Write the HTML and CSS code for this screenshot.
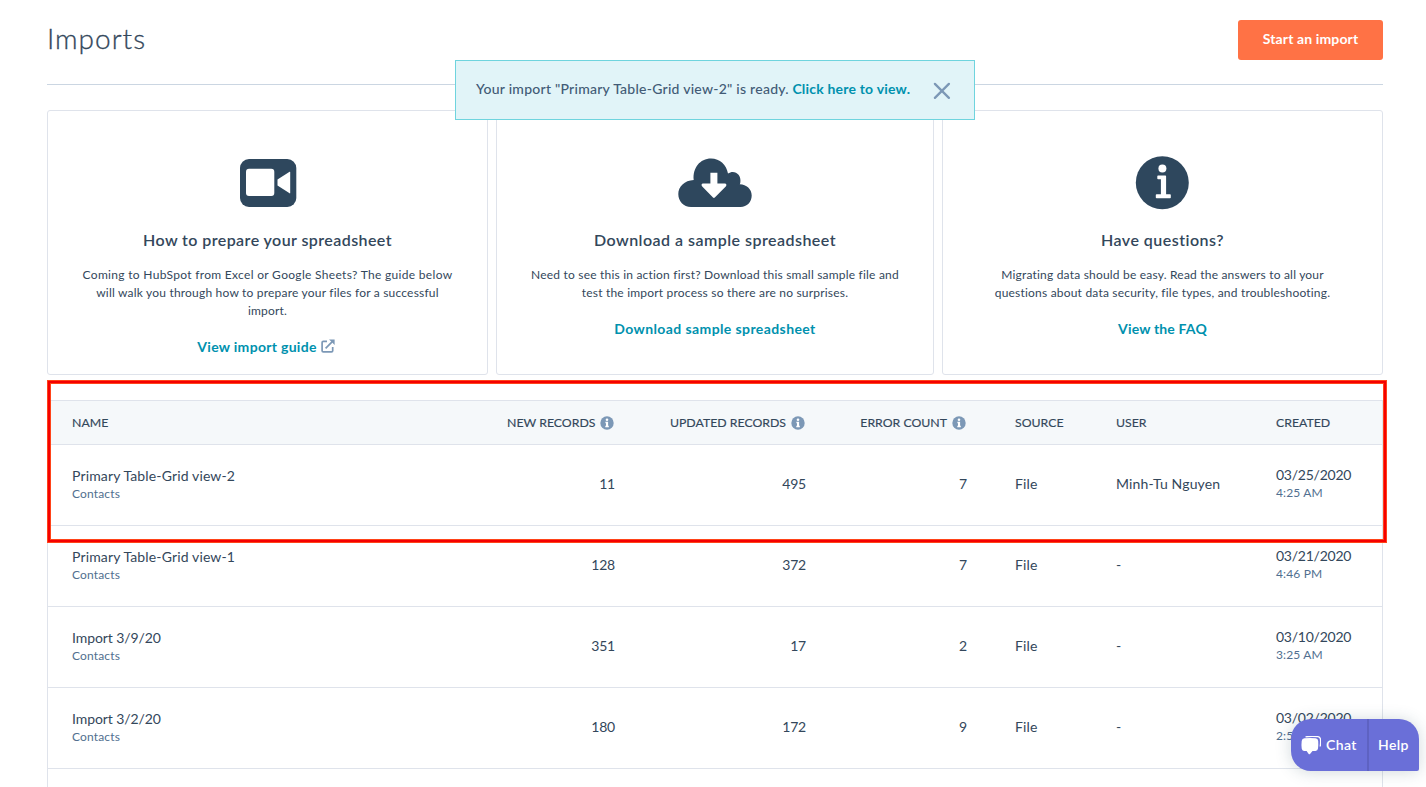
FILE: index.html
```
<!DOCTYPE html>
<html lang="en">
<head>
<meta charset="utf-8">
<title>Imports</title>
<link rel="stylesheet" href="styles.css">
</head>
<body>
<svg class="sprite" aria-hidden="true">
  <symbol id="info" viewBox="0 0 14 14">
    <circle cx="7" cy="7" r="6.7" fill="#7c98b6"/>
    <circle cx="7" cy="3.7" r="1.3" fill="#fff"/>
    <path d="M5.400 5.800h2.700v3.900h.700v1.500H5.300V9.700h.700V7.200h-.600z" fill="#fff"/>
  </symbol>
</svg>
<div class="page">
  <header class="header">
    <h1 class="title">Imports</h1>
    <button class="start"><span>Start an import</span></button>
  </header>

  <section class="cards">
    <article class="card">
      <svg class="card-icon" width="76" height="60" viewBox="0 0 76 60">
        <rect x="10" y="7" width="56.300" height="48" rx="9" fill="#2e475d"/>
        <rect x="16" y="16.800" width="28.300" height="27.200" rx="3" fill="#fff"/>
        <path d="M60.200 20v21q0 .6-.6.300L47.500 33.500V27.500L59.600 19.800q.6-.3.600.2z" fill="#fff"/>
      </svg>
      <h2 class="card-title t1">How to prepare your spreadsheet</h2>
      <p class="card-text"><span class="p1">Coming to HubSpot from Excel or Google Sheets? The guide below</span><br><span class="p2">will walk you through how to prepare your files for a successful</span><br><span class="p3">import.</span></p>
      <a class="card-link guide"><span class="l1">View import guide</span>
        <svg width="14" height="14" viewBox="0 0 14 14" fill="none" stroke="#7c98b6" stroke-width="1.700"><path d="M6 2.300H2.300Q1.100 2.300 1.100 3.500V11.700Q1.100 12.900 2.300 12.900H10.500Q11.700 12.900 11.700 11.700V8M4.600 9.400L11.300 2.700"/><path d="M8 .400H13.600V6L11.700 4.100 9.900 2.300z" fill="#7c98b6" stroke="none"/></svg>
      </a>
    </article>
    <article class="card">
      <svg class="card-icon" width="76" height="60" viewBox="0 0 76 60">
        <path d="M14 55C6.500 55 1.300 49.300 1.300 42S7.500 28.300 16.700 27.900C15.500 16 23 6.500 34 6.500c9 0 15.500 6.500 17 15 6-4.300 13.500.5 12.400 8.500-.1.900-.3 1.500-.6 2.200C69.500 32.600 74.700 37 74.700 43.500 74.700 50 70 55 63.500 55z" fill="#2e475d"/>
        <path transform="translate(1.100 0)" d="M32.300 20.700h7v10.800h7.500q2.300.5 1.100 2.800L36.700 45.600q-.9.700-1.800 0L23.900 34.300q-1.300-2.300 1-2.800h7.400z" fill="#fff"/>
      </svg>
      <h2 class="card-title t2">Download a sample spreadsheet</h2>
      <p class="card-text"><span class="p4">Need to see this in action first? Download this small sample file and</span><br><span class="p5">test the import process so there are no surprises.</span></p>
      <a class="card-link"><span class="l2">Download sample spreadsheet</span></a>
    </article>
    <article class="card">
      <svg class="card-icon" width="76" height="60" viewBox="0 0 76 60">
        <g transform="translate(-.4 0)">
        <circle cx="37.700" cy="30.700" r="26.500" fill="#2e475d"/>
        <circle cx="37.800" cy="16.500" r="4" fill="#fff"/>
        <path d="M33.500 23.500h7.200q.8 0 .8.800v18h3.900q.8 0 .8.800v2.300q0 .8-.8.800H32q-.8 0-.8-.8v-2.300q0-.8.800-.8h4.300V27.300h-2.800q-.8 0-.8-.8v-2.200q0-.8.800-.8z" fill="#fff"/>
        </g>
      </svg>
      <h2 class="card-title t3">Have questions?</h2>
      <p class="card-text"><span class="p6">Migrating data should be easy. Read the answers to all your</span><br><span class="p7">questions about data security, file types, and troubleshooting.</span></p>
      <a class="card-link"><span class="l3">View the FAQ</span></a>
    </article>
  </section>

  <section class="table-wrap">
    <table class="table">
      <colgroup><col class="c-name"><col class="c-new"><col class="c-upd"><col class="c-err"><col class="c-src"><col class="c-user"><col class="c-date"></colgroup>
      <thead>
        <tr>
          <th>NAME</th>
          <th class="num"><span>NEW RECORDS</span><svg class="info"><use href="#info"/></svg></th>
          <th class="num"><span>UPDATED RECORDS</span><svg class="info"><use href="#info"/></svg></th>
          <th class="num"><span>ERROR COUNT</span><svg class="info"><use href="#info"/></svg></th>
          <th>SOURCE</th><th>USER</th><th>CREATED</th>
        </tr>
      </thead>
      <tbody>
        <tr><td class="name"><div>Primary Table-Grid view-2</div><small>Contacts</small></td><td class="num">11</td><td class="num">495</td><td class="num">7</td><td class="mid">File</td><td class="mid">Minh-Tu Nguyen</td><td class="date"><div>03/25/2020</div><small>4:25 AM</small></td></tr>
        <tr><td class="name"><div>Primary Table-Grid view-1</div><small>Contacts</small></td><td class="num">128</td><td class="num">372</td><td class="num">7</td><td class="mid">File</td><td class="mid">-</td><td class="date"><div>03/21/2020</div><small>4:46 PM</small></td></tr>
        <tr><td class="name short"><div>Import 3/9/20</div><small>Contacts</small></td><td class="num">351</td><td class="num">17</td><td class="num">2</td><td class="mid">File</td><td class="mid">-</td><td class="date"><div>03/10/2020</div><small>3:25 AM</small></td></tr>
        <tr><td class="name short"><div>Import 3/2/20</div><small>Contacts</small></td><td class="num">180</td><td class="num">172</td><td class="num">9</td><td class="mid">File</td><td class="mid">-</td><td class="date"><div>03/02/2020</div><small>2:5</small></td></tr>
        <tr class="rest"><td colspan="7"></td></tr>
      </tbody>
    </table>
    <div class="highlight"></div>
  </section>
</div>

<div class="alert">
  <p class="alert-text"><span class="a1">Your import "Primary Table-Grid view-2" is ready.</span> <a class="a2">Click here to view.</a></p>
  <svg class="close" width="18" height="18" viewBox="0 0 18 18" fill="none" stroke="#7c98b6" stroke-width="2.300" stroke-linecap="round"><path d="M1.900 1.900l14 14M15.900 1.900l-14 14"/></svg>
</div>

<div class="widget">
  <div class="chat">
    <svg width="20" height="19" viewBox="0 0 20 19">
      <path d="M4.500 .9Q10.500-.2 17 .7 19.300 1 19.500 3.500 19.800 7 19.200 10.500" fill="none" stroke="#fff" stroke-width="1.300"/>
      <path d="M3.500 2.300Q9 1.500 14.500 2.300 17 2.600 17.200 5 17.500 9 17 12.500 16.700 14.700 14.500 15H11.500L9 18Q8.300 18.700 7.700 18L5.600 15H3Q1 14.800.700 12.500.2 9 .7 5 1 2.600 3.500 2.300z" fill="#fff"/>
    </svg>
    <span>Chat</span>
  </div>
  <div class="help">Help</div>
</div>
</body>
</html>
```

FILE: styles.css
```
* { box-sizing: border-box; }
html, body { height: 100%; }
body {
  margin: 0;
  overflow: hidden;
  background: #fff;
  color: #33475b;
  font-family: Lato, "Open Sans", sans-serif;
  font-size: 14px;
}
.sprite { position: absolute; width: 0; height: 0; }
.page { height: 787px; padding: 0 43px 0 47px; overflow: hidden; }

.header {
  display: flex;
  justify-content: space-between;
  align-items: flex-start;
  height: 85px;
  padding-top: 20px;
  border-bottom: 1px solid #cbd6e2;
}
.title { margin: 0; font-size: 28px; line-height: 37px; font-weight: 300; letter-spacing: 1px; -webkit-text-stroke: .3px; }
.start {
  width: 145px;
  height: 40px;
  padding: 0 0 2px;
  border: 0;
  border-radius: 3px;
  background: #ff7245;
  color: #fff;
  font: 700 14px/38px Lato, sans-serif;
  letter-spacing: .13px;
}

.cards { display: grid; grid-template-columns: 441px 438px 441px; gap: 8px; margin-top: 25px; }
.card {
  display: flex;
  flex-direction: column;
  align-items: center;
  height: 265px;
  padding-top: 41px;
  border: 1px solid #dfe3eb;
  border-radius: 3px;
  text-align: center;
}
.card-icon { display: block; }
.card-title { margin: 16px 0 0; font-size: 16px; line-height: 24px; font-weight: 600; white-space: nowrap; }
.t1 { letter-spacing: .42px; }
.t2, .t3 { letter-spacing: .47px; }
.card-text { margin: 14px 0 0; font-size: 12px; line-height: 18px; letter-spacing: .2px; white-space: nowrap; }
.p1 { letter-spacing: .31px; }
.card-link {
  display: flex;
  align-items: center;
  gap: 4px;
  margin-top: 15px;
  height: 22px;
  color: #0091ae;
  font-size: 14px;
  font-weight: 700;
  white-space: nowrap;
}
.guide { margin-right: 3px; }
.l1 { letter-spacing: .3px; }
.l2 { letter-spacing: .4px; }
.l3 { letter-spacing: .17px; }

.table-wrap { position: relative; margin-top: 25px; }
.table {
  width: 1336px;
  table-layout: fixed;
  border-collapse: separate;
  border-spacing: 0;
  border: 1px solid #dfe3eb;
  border-bottom: 0;
}
.c-name { width: 435px; }
.c-new { width: 156px; }
.c-upd { width: 191px; }
.c-err { width: 161px; }
.c-src { width: 101px; }
.c-user { width: 160px; }
.c-date { width: 130px; }
th, td { padding: 0 24px; text-align: left; white-space: nowrap; border-bottom: 1px solid #dfe3eb; }
th { height: 44px; background: #f5f8fa; font-size: 12.3px; font-weight: 400; -webkit-text-stroke: .15px; }
td { height: 81px; }
.num { text-align: right; }
td.num { padding-bottom: 3px; letter-spacing: -.2px; }
td.mid { padding-bottom: 3px; letter-spacing: .15px; }
.info { width: 14px; height: 14px; margin: -2px 1px 0 5px; vertical-align: middle; }
td div { line-height: 18px; }
td small { display: block; color: #516f90; font-size: 12px; line-height: 18px; letter-spacing: .15px; }
.name div { letter-spacing: .14px; }
.short div { letter-spacing: -.08px; }
.date { padding-right: 0; padding-bottom: 2px; }
.date div { letter-spacing: -.25px; }
.rest td { border: 0; }
.highlight {
  position: absolute;
  left: 1px;
  top: -19px;
  width: 1338px;
  height: 161px;
  border: 2px solid #f50000;
  box-shadow: 0 0 0 1px #ff4319, inset 0 0 0 1px #ff4319;
}

.alert {
  position: absolute;
  left: 455px;
  top: 60px;
  display: flex;
  justify-content: space-between;
  width: 520px;
  height: 60px;
  padding: 16px 23px 0 20px;
  border: 1px solid #6fd4de;
  background: #e1f4f8;
}
.alert-text { margin: 0; line-height: 24px; color: #425b76; font-weight: 500; white-space: nowrap; }
.a1 { letter-spacing: .25px; }
.a2 { color: #0091ae; font-weight: 700; letter-spacing: .2px; }
.close { margin-top: 5px; }

.widget {
  position: absolute;
  left: 1291px;
  top: 719px;
  display: flex;
  width: 128px;
  height: 52px;
  border-radius: 20px 20px 2px 20px;
  background: #6a6fd8;
  box-shadow: 0 1px 16px rgba(45, 80, 95, .22);
  color: #fff;
  font-weight: 600;
  font-size: 14px;
}
.chat { display: flex; align-items: center; gap: 5px; width: 78px; padding-left: 10px; border-right: 2px solid #5e62c2; letter-spacing: .4px; }
.chat span { padding-bottom: 2px; }
.help { flex: 1; display: flex; align-items: center; padding: 0 0 2px 9px; letter-spacing: .4px; }
```
